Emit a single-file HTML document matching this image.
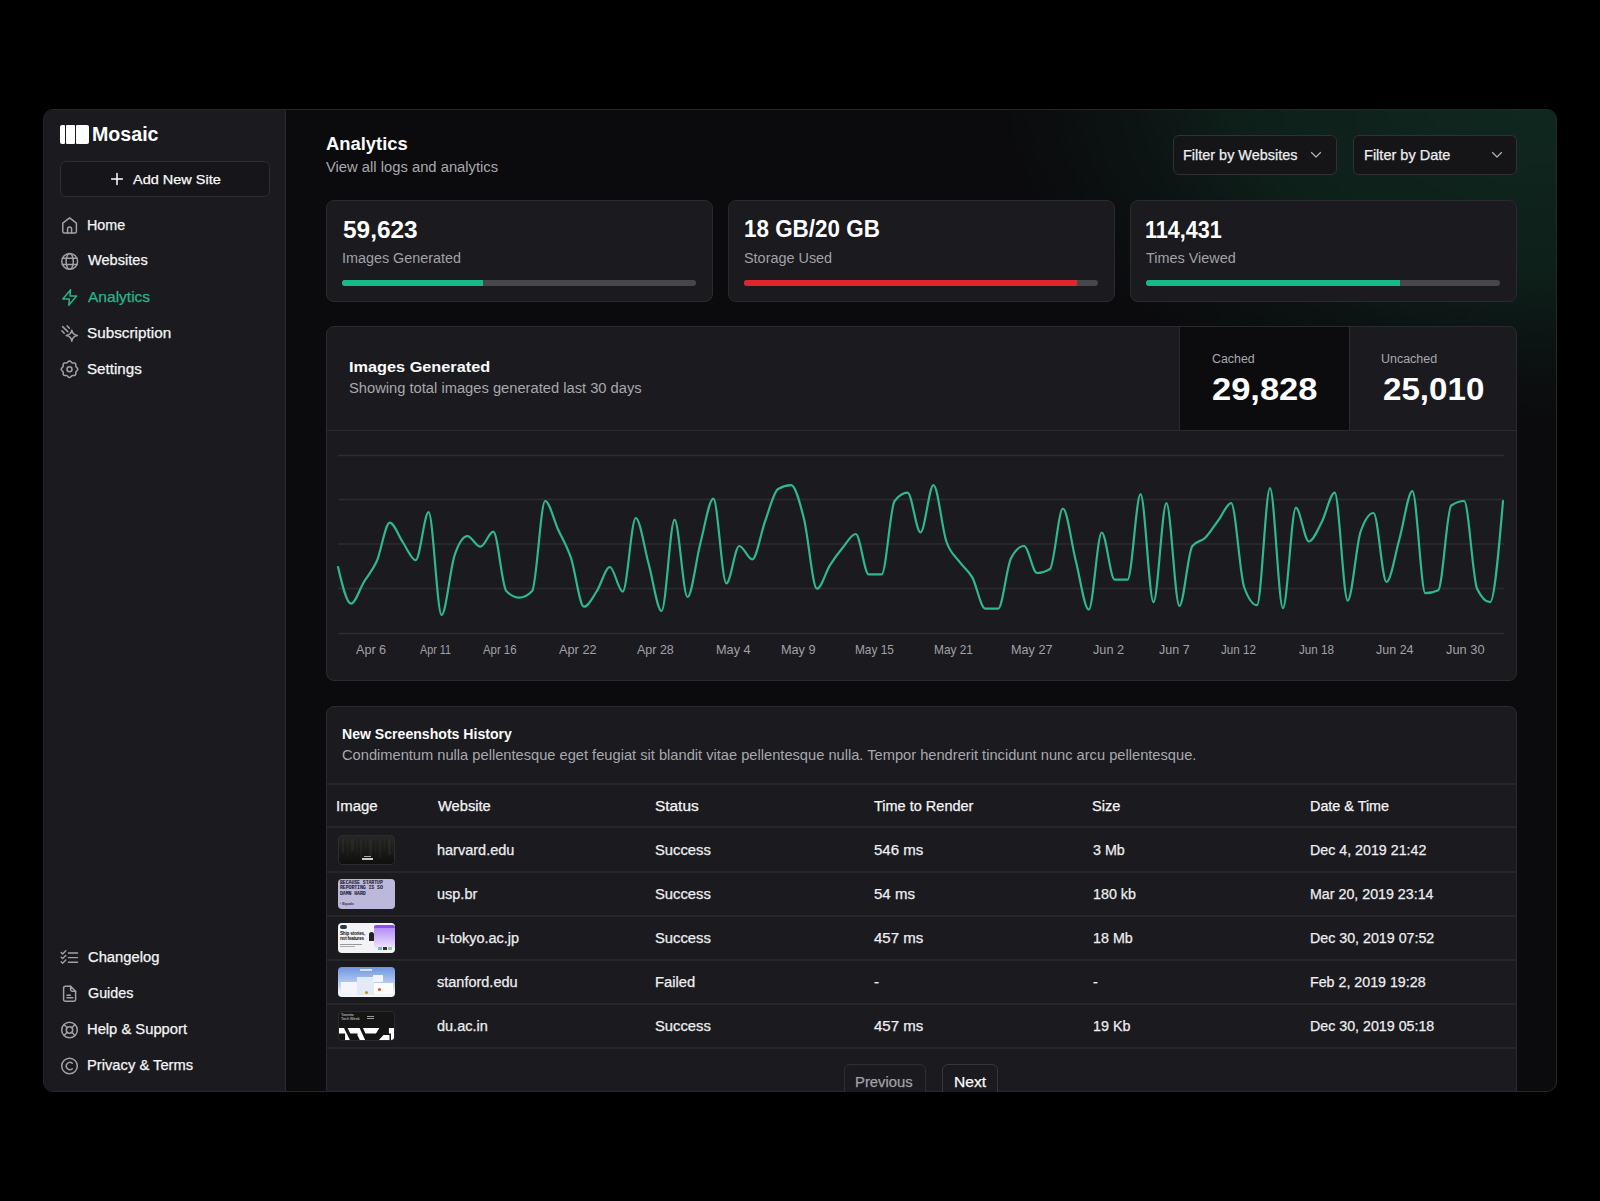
<!DOCTYPE html>
<html><head><meta charset="utf-8"><style>*{box-sizing:border-box;margin:0;padding:0}
html,body{width:1600px;height:1201px;background:#000;overflow:hidden;font-family:"Liberation Sans",sans-serif;color:#fff}
.a{position:absolute}
.t{position:absolute;white-space:nowrap;line-height:1;transform-origin:0 0}
#frame{position:absolute;left:43px;top:109px;width:1514px;height:983px;border:1px solid #27272c;border-radius:10px;overflow:hidden;background:#0b0b0e}
.ic{position:absolute;fill:none;stroke:#a1a1a6;stroke-width:1.5;stroke-linecap:round;stroke-linejoin:round;overflow:visible}
.card{position:absolute;background:#1a1a1f;border:1px solid #2a2a2f;border-radius:8px}
.bar{position:absolute;height:6px;border-radius:3px;background:#46464b;overflow:hidden}
.bar i{position:absolute;left:0;top:0;height:6px;display:block}
.hr{position:absolute;height:2px;background:#26262b}
.th0{position:absolute;width:57px;height:30px;border-radius:4px;overflow:hidden}

.m{-webkit-text-stroke:0.25px currentColor}
</style></head><body>
<div id="frame"><div class="a" style="left:0;top:0;width:1512px;height:981px;background:radial-gradient(ellipse 540px 330px at 1496px -20px,rgba(24,96,64,0.34) 0%,rgba(22,90,60,0.26) 55%,rgba(18,70,46,0.11) 80%,rgba(0,0,0,0) 100%)"></div><div class="a" style="left:0px;top:0px;width:242px;height:981px;background:#1a1a1f;border-right:1px solid #2a2a2f"></div><div class="a" style="left:15.5px;top:15px;width:5.5px;height:18.5px;background:#fff;border-radius:2px 1px 1px 2px"></div><div class="a" style="left:22.299999999999997px;top:15px;width:8.700000000000003px;height:18.5px;background:#fff;border-radius:1px"></div><div class="a" style="left:32px;top:15px;width:12.5px;height:18.5px;background:#fff;border-radius:1px 2px 2px 1px"></div><div class="a" style="left:15.5px;top:51px;width:210.0px;height:36px;border:1.5px solid #2e2e33;border-radius:6px;background:#16161a"></div><div class="card" style="left:282px;top:90px;width:387px;height:102px;"></div><div class="card" style="left:684px;top:90px;width:387px;height:102px;"></div><div class="card" style="left:1086px;top:90px;width:387px;height:102px;"></div><div class="card" style="left:282px;top:216px;width:1191px;height:355px;"></div><div class="a" style="left:1135px;top:217px;width:171px;height:104px;background:#0c0c0f;border-left:1px solid #2a2a2f;border-right:1px solid #2a2a2f"></div><div class="a" style="left:283px;top:320px;width:1189px;height:1px;background:#2a2a2f"></div><div class="card" style="left:282px;top:596px;width:1191px;height:414px;"></div><div class="a" style="left:1128.5px;top:24.5px;width:164.0px;height:40.0px;border:1px solid #303035;border-radius:6px;background:#151518"></div><div class="a" style="left:1308.5px;top:24.5px;width:164.0px;height:40.0px;border:1px solid #303035;border-radius:6px;background:#151518"></div></div><div class="bar" style="left:342px;top:280px;width:354px"><i style="width:141px;background:#17b986"></i></div><div class="bar" style="left:744px;top:280px;width:354px"><i style="width:333px;background:#e0262b"></i></div><div class="bar" style="left:1146px;top:280px;width:354px"><i style="width:254px;background:#17b986"></i></div><svg class="ic" style="left:1311.3px;top:151px;stroke:#b0b0b4;stroke-width:1.2" width="10" height="8" viewBox="0 0 10 8"><path d="M0.5 1.5l4.5 4.5 4.5-4.5"/></svg><svg class="ic" style="left:1491.8px;top:151px;stroke:#b0b0b4;stroke-width:1.2" width="10" height="8" viewBox="0 0 10 8"><path d="M0.5 1.5l4.5 4.5 4.5-4.5"/></svg><svg class="ic" style="left:111px;top:173px;stroke:#fff" width="12" height="12" viewBox="0 0 12 12"><path d="M6 0.6v10.8M0.6 6h10.8"/></svg><div class="hr" style="left:327px;top:783px;width:1189px"></div><div class="hr" style="left:327px;top:826px;width:1189px"></div><div class="hr" style="left:327px;top:871px;width:1189px"></div><div class="hr" style="left:327px;top:915px;width:1189px"></div><div class="hr" style="left:327px;top:959px;width:1189px"></div><div class="hr" style="left:327px;top:1003px;width:1189px"></div><div class="hr" style="left:327px;top:1047px;width:1189px"></div><div class="a" style="left:844px;top:1064px;width:82px;height:40px;border:1px solid #2e2e33;border-radius:6px;background:#1a1a1f"></div><div class="a" style="left:942px;top:1064px;width:56px;height:40px;border:1px solid #36363b;border-radius:6px;background:#1a1a1f"></div><div class="a" style="left:0;top:1092px;width:1600px;height:109px;background:#000"></div><svg class="ic" style="left:61px;top:216px;" width="18" height="19" viewBox="61 216 18 19"><path d="M62.8 223.2L69.6 217.8L76.4 223.2V231.4A1.6 1.6 0 0 1 74.8 233H64.4A1.6 1.6 0 0 1 62.8 231.4Z"/><path d="M67.6 233V229A2 2 0 0 1 71.6 229V233"/></svg><svg class="ic" style="left:60px;top:252px;" width="20" height="20" viewBox="60 252 20 20"><circle cx="69.7" cy="261.4" r="7.9"/><ellipse cx="69.7" cy="261.4" rx="3.6" ry="7.9"/><path d="M62.4 258.3H77M62.4 264.6H77"/></svg><svg class="ic" style="left:60px;top:288px;stroke:#27b487" width="20" height="20" viewBox="60 288 20 20"><path d="M70.6 289.8L62.8 299H69.4L68.8 305.2L76.6 296H70z"/></svg><svg class="ic" style="left:58px;top:322px;" width="24" height="24" viewBox="58 322 24 24"><path d="M71.8 330.2Q72.6 334.8 77.4 335.6Q72.6 336.4 71.8 341.2Q71 336.4 66.2 335.6Q71 334.8 71.8 330.2Z"/><path d="M62.6 326.6L67.8 331.6M67.2 325.9L69.4 328.2M61.9 330.7L64.2 333.2"/></svg><svg class="ic" style="left:58px;top:358px;" width="24" height="24" viewBox="58 358 24 24"><path d="M69.50 360.95L70.29 361.18L70.98 361.75L71.57 362.37L72.16 362.78L72.87 362.90L73.72 362.88L74.61 362.97L75.33 363.37L75.73 364.09L75.82 364.98L75.80 365.83L75.92 366.54L76.33 367.13L76.95 367.72L77.52 368.41L77.75 369.20L77.52 369.99L76.95 370.68L76.33 371.27L75.92 371.86L75.80 372.57L75.82 373.42L75.73 374.31L75.33 375.03L74.61 375.43L73.72 375.52L72.87 375.50L72.16 375.62L71.57 376.03L70.98 376.65L70.29 377.22L69.50 377.45L68.71 377.22L68.02 376.65L67.43 376.03L66.84 375.62L66.13 375.50L65.28 375.52L64.39 375.43L63.67 375.03L63.27 374.31L63.18 373.42L63.20 372.57L63.08 371.86L62.67 371.27L62.05 370.68L61.48 369.99L61.25 369.20L61.48 368.41L62.05 367.72L62.67 367.13L63.08 366.54L63.20 365.83L63.18 364.98L63.27 364.09L63.67 363.37L64.39 362.97L65.28 362.88L66.13 362.90L66.84 362.78L67.43 362.37L68.02 361.75L68.71 361.18L69.50 360.95Z"/><circle cx="69.5" cy="369.2" r="2.5"/></svg><svg class="ic" style="left:58px;top:948px;stroke-width:1.4" width="24" height="18" viewBox="58 948 24 18"><path d="M68.4 953H77.6M68.4 957.6H77.6M68.4 962.2H77.6"/><path d="M61.2 952.6L62.6 954L65.8 950.8M61.2 957.2L62.6 958.6L65.8 955.4M61.2 961.8L62.6 963.2L65.8 960"/></svg><svg class="ic" style="left:60px;top:983px;" width="20" height="20" viewBox="60 983 20 20"><path d="M70.6 986.2H65.4A1.8 1.8 0 0 0 63.6 988V999.4A1.8 1.8 0 0 0 65.4 1001.2H73.8A1.8 1.8 0 0 0 75.6 999.4V991.2"/><path d="M70.6 986.2V989.4A1.8 1.8 0 0 0 72.4 991.2H75.6Z"/><path d="M67 995.2H70.4M67 997.8H72.8"/></svg><svg class="ic" style="left:60px;top:1020px;" width="20" height="20" viewBox="60 1020 20 20"><circle cx="69.5" cy="1030" r="7.8"/><circle cx="69.5" cy="1030" r="3.2"/><path d="M64 1024.5L67.2 1027.7M71.8 1032.3L75 1035.5M75 1024.5L71.8 1027.7M67.2 1032.3L64 1035.5"/></svg><svg class="ic" style="left:60px;top:1056px;" width="20" height="20" viewBox="60 1056 20 20"><circle cx="69.5" cy="1066" r="7.8"/><path d="M72.3 1063.3A3.6 3.6 0 1 0 72.3 1068.7"/></svg><div class="th0" style="left:338px;top:834.5px;background:linear-gradient(#262624,#181817 60%,#0f0f0e);border:1px solid #2c2c2c"><div class="a" style="left:3px;top:3px;width:2px;height:14px;background:rgba(110,110,100,0.108)"></div><div class="a" style="left:8px;top:3px;width:1px;height:18px;background:rgba(110,110,100,0.09)"></div><div class="a" style="left:12px;top:3px;width:3px;height:12px;background:rgba(110,110,100,0.12)"></div><div class="a" style="left:17px;top:3px;width:1px;height:16px;background:rgba(110,110,100,0.072)"></div><div class="a" style="left:21px;top:3px;width:2px;height:20px;background:rgba(110,110,100,0.096)"></div><div class="a" style="left:26px;top:3px;width:1px;height:13px;background:rgba(110,110,100,0.084)"></div><div class="a" style="left:30px;top:3px;width:3px;height:17px;background:rgba(110,110,100,0.12)"></div><div class="a" style="left:36px;top:3px;width:1px;height:15px;background:rgba(110,110,100,0.072)"></div><div class="a" style="left:40px;top:3px;width:2px;height:19px;background:rgba(110,110,100,0.096)"></div><div class="a" style="left:45px;top:3px;width:1px;height:12px;background:rgba(110,110,100,0.084)"></div><div class="a" style="left:49px;top:3px;width:3px;height:16px;background:rgba(110,110,100,0.12)"></div><div class="a" style="left:53px;top:3px;width:1px;height:14px;background:rgba(110,110,100,0.072)"></div><div class="a" style="left:25px;top:20.5px;width:7px;height:1.2px;background:#aaa"></div><div class="a" style="left:23px;top:22.5px;width:11px;height:1.6px;background:#ccc"></div></div><div class="th0" style="left:338px;top:879px;background:#bcb8dc"><div class="a" style="left:2px;top:2px;font:bold 5px/5.3px 'Liberation Mono',monospace;color:#1d1b2e;letter-spacing:-.15px">BECAUSE STARTUP<br>REPORTING IS SO<br>DAMN HARD</div><div class="a" style="left:2px;top:23px;font:bold 3.6px/4px 'Liberation Sans';color:#333">‹ Equals</div></div><div class="th0" style="left:338px;top:923px;background:#f3f2f5"><div class="a" style="left:2px;top:2px;width:7px;height:4px;background:#2b3a4a;border-radius:2px"></div><div class="a" style="left:2px;top:9px;font:bold 4.6px/4.6px 'Liberation Sans';color:#111;letter-spacing:-.2px">Ship stories,<br>not features</div><div class="a" style="left:2px;top:21px;width:22px;height:1px;background:#999"></div><div class="a" style="left:2px;top:23px;width:15px;height:1px;background:#aaa"></div><div class="a" style="left:36px;top:2px;width:21px;height:4px;background:#8d4ef0;border-radius:2px 2px 0 0"></div><div class="a" style="left:36px;top:5px;width:21px;height:20px;background:linear-gradient(#b58cf5,#efe6fd)"></div><div class="a" style="left:31px;top:9px;width:5px;height:9px;background:#222;border-radius:3px 3px 1px 1px"></div><div class="a" style="left:40px;top:24px;width:4px;height:3px;background:#5bc0de"></div><div class="a" style="left:45px;top:24px;width:4px;height:3px;background:#333"></div><div class="a" style="left:50px;top:24px;width:4px;height:3px;background:#7ed67e"></div></div><div class="th0" style="left:338px;top:967px;background:linear-gradient(#6d95e0,#a9c2ee 45%,#e8eef9 80%,#f6f8fc)"><div class="a" style="left:22px;top:2px;width:12px;height:2px;background:rgba(255,255,255,.7)"></div><div class="a" style="left:3px;top:15px;width:19px;height:11px;background:#f4f6fb"></div><div class="a" style="left:19px;top:10px;width:17px;height:18px;background:#e3e9f5"></div><div class="a" style="left:35px;top:8px;width:10px;height:7px;background:#f0f4fb"></div><div class="a" style="left:36px;top:16px;width:19px;height:11px;background:#fbfcfe"></div><div class="a" style="left:40px;top:21px;width:3px;height:3px;border-radius:50%;background:#d9552a"></div><div class="a" style="left:27px;top:24px;width:3px;height:3px;border-radius:50%;background:#c90"></div></div><div class="th0" style="left:338px;top:1011px;background:#151515;border:1px solid #2a2a2a"><div class="a" style="left:2px;top:2px;font:3.8px/3.8px 'Liberation Sans';color:#ddd">Toronto<br>Tech Week</div><div class="a" style="left:28px;top:4px;width:7px;height:1px;background:#999"></div><div class="a" style="left:28px;top:6px;width:7px;height:1px;background:#999"></div><svg class="a" style="left:-1px;top:-1px" width="57" height="30" viewBox="0 0 57 30"><path d="M0 17H6L12.4 30H7.1V22.4H0Z M9.6 17H21.6L27.6 30H22.3L19.5 24.5V22.4H12.3Z M24.9 17H41.4L38 22.4H27.5Z M40 30L45.5 24H51.5V30Z M50.9 17H57V30H53V22.4H50.9Z" fill="#fff"/></svg></div>
<svg class="a" style="left:0;top:0" width="1600" height="1201" viewBox="0 0 1600 1201"><line x1="338" x2="1504" y1="455.5" y2="455.5" stroke="#2c2c31" stroke-width="1.3"/><line x1="338" x2="1504" y1="499.5" y2="499.5" stroke="#2c2c31" stroke-width="1.3"/><line x1="338" x2="1504" y1="544" y2="544" stroke="#2c2c31" stroke-width="1.3"/><line x1="338" x2="1504" y1="588.5" y2="588.5" stroke="#2c2c31" stroke-width="1.3"/><line x1="338" x2="1504" y1="633.5" y2="633.5" stroke="#2c2c31" stroke-width="1.3"/><path d="M338.00,567.00C342.31,585.35 346.63,603.70 350.94,603.70C355.26,603.70 359.57,589.12 363.89,582.00C368.20,574.88 372.52,570.88 376.83,561.00C381.15,551.12 385.46,522.70 389.78,522.70C394.09,522.70 398.41,535.75 402.72,542.00C407.04,548.25 411.35,560.20 415.67,560.20C419.98,560.20 424.30,512.20 428.61,512.20C432.93,512.20 437.24,615.00 441.56,615.00C445.87,615.00 450.19,568.70 454.50,555.70C458.81,542.70 463.13,536.20 467.44,536.20C471.76,536.20 476.07,546.70 480.39,546.70C484.70,546.70 489.02,531.70 493.33,531.70C497.65,531.70 501.96,586.53 506.28,591.00C510.59,595.47 514.91,597.70 519.22,597.70C523.54,597.70 527.85,595.47 532.17,591.00C536.48,586.53 540.80,501.00 545.11,501.00C549.43,501.00 553.74,520.00 558.06,529.50C562.37,539.00 566.69,545.13 571.00,558.00C575.31,570.87 579.63,606.70 583.94,606.70C588.26,606.70 592.57,597.62 596.89,591.00C601.20,584.38 605.52,567.00 609.83,567.00C614.15,567.00 618.46,591.70 622.78,591.70C627.09,591.70 631.41,518.00 635.72,518.00C640.04,518.00 644.35,548.50 648.67,564.00C652.98,579.50 657.30,611.00 661.61,611.00C665.93,611.00 670.24,519.70 674.56,519.70C678.87,519.70 683.19,597.00 687.50,597.00C691.81,597.00 696.13,559.38 700.44,543.00C704.76,526.62 709.07,498.70 713.39,498.70C717.70,498.70 722.02,583.40 726.33,583.40C730.65,583.40 734.96,546.00 739.28,546.00C743.59,546.00 747.91,559.40 752.22,559.40C756.54,559.40 760.85,532.73 765.17,521.00C769.48,509.27 773.80,491.53 778.11,489.00C782.43,486.47 786.74,485.20 791.06,485.20C795.37,485.20 799.69,501.75 804.00,519.00C808.31,536.25 812.63,588.70 816.94,588.70C821.26,588.70 825.57,572.27 829.89,565.40C834.20,558.53 838.52,552.73 842.83,547.50C847.15,542.27 851.46,534.00 855.78,534.00C860.09,534.00 864.41,574.40 868.72,574.40C873.04,574.40 877.35,574.40 881.67,574.40C885.98,574.40 890.30,506.53 894.61,501.00C898.93,495.47 903.24,492.70 907.56,492.70C911.87,492.70 916.19,532.50 920.50,532.50C924.81,532.50 929.13,485.20 933.44,485.20C937.76,485.20 942.07,528.75 946.39,541.50C950.70,554.25 955.02,555.72 959.33,561.70C963.65,567.68 967.96,569.58 972.28,577.40C976.59,585.22 980.91,608.60 985.22,608.60C989.54,608.60 993.85,608.60 998.17,608.60C1002.48,608.60 1006.80,566.00 1011.11,558.00C1015.43,550.00 1019.74,546.00 1024.06,546.00C1028.37,546.00 1032.69,573.00 1037.00,573.00C1041.31,573.00 1045.63,571.67 1049.94,569.00C1054.26,566.33 1058.57,508.50 1062.89,508.50C1067.20,508.50 1071.52,544.13 1075.83,561.00C1080.15,577.87 1084.46,609.70 1088.78,609.70C1093.09,609.70 1097.41,532.50 1101.72,532.50C1106.04,532.50 1110.35,579.70 1114.67,579.70C1118.98,579.70 1123.30,579.70 1127.61,579.70C1131.93,579.70 1136.24,494.20 1140.56,494.20C1144.87,494.20 1149.19,602.20 1153.50,602.20C1157.81,602.20 1162.13,503.20 1166.44,503.20C1170.76,503.20 1175.07,606.00 1179.39,606.00C1183.70,606.00 1188.02,551.53 1192.33,546.00C1196.65,540.47 1200.96,541.95 1205.28,537.70C1209.59,533.45 1213.91,526.25 1218.22,520.50C1222.54,514.75 1226.85,503.20 1231.17,503.20C1235.48,503.20 1239.80,574.87 1244.11,587.00C1248.43,599.13 1252.74,605.20 1257.06,605.20C1261.37,605.20 1265.69,488.20 1270.00,488.20C1274.31,488.20 1278.63,608.20 1282.94,608.20C1287.26,608.20 1291.57,507.70 1295.89,507.70C1300.20,507.70 1304.52,541.50 1308.83,541.50C1313.15,541.50 1317.46,530.13 1321.78,522.00C1326.09,513.87 1330.41,492.70 1334.72,492.70C1339.04,492.70 1343.35,600.70 1347.67,600.70C1351.98,600.70 1356.30,544.17 1360.61,531.70C1364.93,519.23 1369.24,513.00 1373.56,513.00C1377.87,513.00 1382.19,582.00 1386.50,582.00C1390.81,582.00 1395.13,554.13 1399.44,539.00C1403.76,523.87 1408.07,491.20 1412.39,491.20C1416.70,491.20 1421.02,593.20 1425.33,593.20C1429.65,593.20 1433.96,592.20 1438.28,590.20C1442.59,588.20 1446.91,508.50 1451.22,505.50C1455.54,502.50 1459.85,501.00 1464.17,501.00C1468.48,501.00 1472.80,579.70 1477.11,588.70C1481.43,597.70 1485.74,602.20 1490.06,602.20C1494.37,602.20 1498.69,551.60 1503.00,501.00" fill="none" stroke="#2eb98a" stroke-width="2.2" stroke-linejoin="round" stroke-linecap="round"/></svg>
<div class="t" id="mosaic" style="left:92.43px;top:125.26px;font-size:19.50px;font-weight:bold;color:#ffffff;transform:scaleX(1.0062)">Mosaic</div>
<div class="t m" id="addnew" style="left:133.42px;top:173.01px;font-size:13.50px;font-weight:normal;color:#fafafa;transform:scaleX(1.0732)">Add New Site</div>
<div class="t m" id="n_home" style="left:87.40px;top:218.01px;font-size:14.00px;font-weight:normal;color:#f4f4f5;transform:scaleX(1.0198)">Home</div>
<div class="t m" id="n_web" style="left:88.41px;top:253.40px;font-size:14.00px;font-weight:normal;color:#f4f4f5;transform:scaleX(1.0422)">Websites</div>
<div class="t m" id="n_ana" style="left:88.44px;top:289.71px;font-size:14.00px;font-weight:normal;color:#27b487;transform:scaleX(1.1091)">Analytics</div>
<div class="t m" id="n_sub" style="left:86.91px;top:325.81px;font-size:14.00px;font-weight:normal;color:#f4f4f5;transform:scaleX(1.0921)">Subscription</div>
<div class="t m" id="n_set" style="left:86.92px;top:361.81px;font-size:14.00px;font-weight:normal;color:#f4f4f5;transform:scaleX(1.0820)">Settings</div>
<div class="t m" id="n_chg" style="left:88.20px;top:950.40px;font-size:14.00px;font-weight:normal;color:#f4f4f5;transform:scaleX(1.0537)">Changelog</div>
<div class="t m" id="n_gui" style="left:88.20px;top:986.40px;font-size:14.00px;font-weight:normal;color:#f4f4f5;transform:scaleX(1.0227)">Guides</div>
<div class="t m" id="n_hlp" style="left:87.14px;top:1022.40px;font-size:14.00px;font-weight:normal;color:#f4f4f5;transform:scaleX(1.0532)">Help &amp; Support</div>
<div class="t m" id="n_prv" style="left:87.16px;top:1058.11px;font-size:14.00px;font-weight:normal;color:#f4f4f5;transform:scaleX(1.0520)">Privacy &amp; Terms</div>
<div class="t" id="title" style="left:326.00px;top:136.01px;font-size:17.50px;font-weight:bold;color:#fafafa;transform:scaleX(1.0509)">Analytics</div>
<div class="t" id="sub" style="left:326.01px;top:159.90px;font-size:14.00px;font-weight:normal;color:#a8a8ad;transform:scaleX(1.0550)">View all logs and analytics</div>
<div class="t m" id="f_web" style="left:1183.38px;top:148.21px;font-size:14.50px;font-weight:normal;color:#ededf0;transform:scaleX(0.9958)">Filter by Websites</div>
<div class="t m" id="f_dat" style="left:1364.19px;top:148.21px;font-size:14.50px;font-weight:normal;color:#ededf0;transform:scaleX(1.0025)">Filter by Date</div>
<div class="t" id="c1n" style="left:342.97px;top:218.51px;font-size:23.00px;font-weight:bold;color:#ffffff;transform:scaleX(1.0618)">59,623</div>
<div class="t" id="c1l" style="left:341.97px;top:250.51px;font-size:14.00px;font-weight:normal;color:#a1a1a6;transform:scaleX(1.0263)">Images Generated</div>
<div class="t" id="c2n" style="left:744.01px;top:218.26px;font-size:23.00px;font-weight:bold;color:#ffffff;transform:scaleX(0.9750)">18 GB/20 GB</div>
<div class="t" id="c2l" style="left:743.99px;top:250.51px;font-size:14.00px;font-weight:normal;color:#a1a1a6;transform:scaleX(1.0295)">Storage Used</div>
<div class="t" id="c3n" style="left:1145.06px;top:219.01px;font-size:23.00px;font-weight:bold;color:#ffffff;transform:scaleX(0.9383)">114,431</div>
<div class="t" id="c3l" style="left:1146.00px;top:250.51px;font-size:14.00px;font-weight:normal;color:#a1a1a6;transform:scaleX(1.0289)">Times Viewed</div>
<div class="t" id="ch_t" style="left:348.91px;top:359.00px;font-size:15.00px;font-weight:bold;color:#fafafa;transform:scaleX(1.0853)">Images Generated</div>
<div class="t" id="ch_s" style="left:348.95px;top:381.01px;font-size:14.00px;font-weight:normal;color:#a8a8ad;transform:scaleX(1.0505)">Showing total images generated last 30 days</div>
<div class="t" id="cached" style="left:1211.80px;top:352.81px;font-size:12.50px;font-weight:normal;color:#a8a8ad;transform:scaleX(0.9908)">Cached</div>
<div class="t" id="cachedn" style="left:1211.96px;top:373.76px;font-size:31.00px;font-weight:bold;color:#ffffff;transform:scaleX(1.1120)">29,828</div>
<div class="t" id="uncached" style="left:1381.36px;top:352.81px;font-size:12.50px;font-weight:normal;color:#a8a8ad;transform:scaleX(0.9973)">Uncached</div>
<div class="t" id="uncachedn" style="left:1382.99px;top:373.76px;font-size:31.00px;font-weight:bold;color:#ffffff;transform:scaleX(1.0689)">25,010</div>
<div class="t" id="tb_t" style="left:342.02px;top:727.26px;font-size:14.50px;font-weight:bold;color:#fafafa;transform:scaleX(0.9713)">New Screenshots History</div>
<div class="t" id="tb_s" style="left:342.00px;top:748.01px;font-size:14.50px;font-weight:normal;color:#a8a8ad;transform:scaleX(1.0107)">Condimentum nulla pellentesque eget feugiat sit blandit vitae pellentesque nulla. Tempor hendrerit tincidunt nunc arcu pellentesque.</div>
<div class="t" id="xl0" style="left:355.98px;top:643.26px;font-size:13.00px;font-weight:normal;color:#a1a1a6;transform:scaleX(0.9677)">Apr 6</div>
<div class="t" id="xl1" style="left:419.90px;top:643.26px;font-size:13.00px;font-weight:normal;color:#a1a1a6;transform:scaleX(0.8317)">Apr 11</div>
<div class="t" id="xl2" style="left:482.94px;top:643.26px;font-size:13.00px;font-weight:normal;color:#a1a1a6;transform:scaleX(0.8755)">Apr 16</div>
<div class="t" id="xl3" style="left:559.03px;top:643.26px;font-size:13.00px;font-weight:normal;color:#a1a1a6;transform:scaleX(0.9809)">Apr 22</div>
<div class="t" id="xl4" style="left:637.03px;top:643.26px;font-size:13.00px;font-weight:normal;color:#a1a1a6;transform:scaleX(0.9611)">Apr 28</div>
<div class="t" id="xl5" style="left:716.00px;top:643.26px;font-size:13.00px;font-weight:normal;color:#a1a1a6;transform:scaleX(0.9797)">May 4</div>
<div class="t" id="xl6" style="left:780.60px;top:643.26px;font-size:13.00px;font-weight:normal;color:#a1a1a6;transform:scaleX(0.9759)">May 9</div>
<div class="t" id="xl7" style="left:855.40px;top:643.26px;font-size:13.00px;font-weight:normal;color:#a1a1a6;transform:scaleX(0.9101)">May 15</div>
<div class="t" id="xl8" style="left:933.85px;top:643.26px;font-size:13.00px;font-weight:normal;color:#a1a1a6;transform:scaleX(0.9145)">May 21</div>
<div class="t" id="xl9" style="left:1010.80px;top:643.26px;font-size:13.00px;font-weight:normal;color:#a1a1a6;transform:scaleX(0.9719)">May 27</div>
<div class="t" id="xl10" style="left:1093.39px;top:643.26px;font-size:13.00px;font-weight:normal;color:#a1a1a6;transform:scaleX(0.9749)">Jun 2</div>
<div class="t" id="xl11" style="left:1158.98px;top:643.26px;font-size:13.00px;font-weight:normal;color:#a1a1a6;transform:scaleX(0.9615)">Jun 7</div>
<div class="t" id="xl12" style="left:1220.97px;top:643.26px;font-size:13.00px;font-weight:normal;color:#a1a1a6;transform:scaleX(0.8974)">Jun 12</div>
<div class="t" id="xl13" style="left:1299.03px;top:643.26px;font-size:13.00px;font-weight:normal;color:#a1a1a6;transform:scaleX(0.8974)">Jun 18</div>
<div class="t" id="xl14" style="left:1376.01px;top:643.26px;font-size:13.00px;font-weight:normal;color:#a1a1a6;transform:scaleX(0.9620)">Jun 24</div>
<div class="t" id="xl15" style="left:1445.98px;top:643.26px;font-size:13.00px;font-weight:normal;color:#a1a1a6;transform:scaleX(0.9877)">Jun 30</div>
<div class="t m" id="th_img" style="left:336.30px;top:798.90px;font-size:14.00px;font-weight:normal;color:#f4f4f5;transform:scaleX(1.0709)">Image</div>
<div class="t m" id="th_web" style="left:437.79px;top:798.90px;font-size:14.00px;font-weight:normal;color:#f4f4f5;transform:scaleX(1.0481)">Website</div>
<div class="t m" id="th_sta" style="left:654.70px;top:798.90px;font-size:14.00px;font-weight:normal;color:#f4f4f5;transform:scaleX(1.1004)">Status</div>
<div class="t m" id="th_tim" style="left:874.01px;top:798.90px;font-size:14.00px;font-weight:normal;color:#f4f4f5;transform:scaleX(1.0359)">Time to Render</div>
<div class="t m" id="th_siz" style="left:1091.95px;top:798.90px;font-size:14.00px;font-weight:normal;color:#f4f4f5;transform:scaleX(1.0433)">Size</div>
<div class="t m" id="th_dat" style="left:1309.59px;top:798.90px;font-size:14.00px;font-weight:normal;color:#f4f4f5;transform:scaleX(1.0262)">Date &amp; Time</div>
<div class="t m" id="r0c0" style="left:436.76px;top:842.61px;font-size:14.00px;font-weight:normal;color:#ededf0;transform:scaleX(1.0350)">harvard.edu</div>
<div class="t m" id="r0c1" style="left:654.77px;top:842.61px;font-size:14.00px;font-weight:normal;color:#ededf0;transform:scaleX(1.0542)">Success</div>
<div class="t m" id="r0c2" style="left:873.91px;top:842.61px;font-size:14.00px;font-weight:normal;color:#ededf0;transform:scaleX(1.0729)">546 ms</div>
<div class="t m" id="r0c3" style="left:1092.98px;top:842.61px;font-size:14.00px;font-weight:normal;color:#ededf0;transform:scaleX(1.0220)">3 Mb</div>
<div class="t m" id="r0c4" style="left:1309.58px;top:842.61px;font-size:14.00px;font-weight:normal;color:#ededf0;transform:scaleX(1.0168)">Dec 4, 2019 21:42</div>
<div class="t m" id="prev" style="left:855.37px;top:1074.90px;font-size:14.00px;font-weight:normal;color:#a1a1a6;transform:scaleX(1.0576)">Previous</div>
<div class="t m" id="next" style="left:953.53px;top:1074.90px;font-size:14.00px;font-weight:normal;color:#fafafa;transform:scaleX(1.1160)">Next</div>
<div class="t m" style="left:436.76px;top:886.61px;font-size:14.00px;color:#ededf0;transform:scaleX(1.0350)">usp.br</div>
<div class="t m" style="left:654.77px;top:886.61px;font-size:14.00px;color:#ededf0;transform:scaleX(1.0542)">Success</div>
<div class="t m" style="left:873.91px;top:886.61px;font-size:14.00px;color:#ededf0;transform:scaleX(1.0729)">54 ms</div>
<div class="t m" style="left:1092.98px;top:886.61px;font-size:14.00px;color:#ededf0;transform:scaleX(1.0220)">180 kb</div>
<div class="t m" style="left:1309.58px;top:886.61px;font-size:14.00px;color:#ededf0;transform:scaleX(1.0168)">Mar 20, 2019 23:14</div>
<div class="t m" style="left:436.76px;top:930.61px;font-size:14.00px;color:#ededf0;transform:scaleX(1.0350)">u-tokyo.ac.jp</div>
<div class="t m" style="left:654.77px;top:930.61px;font-size:14.00px;color:#ededf0;transform:scaleX(1.0542)">Success</div>
<div class="t m" style="left:873.91px;top:930.61px;font-size:14.00px;color:#ededf0;transform:scaleX(1.0729)">457 ms</div>
<div class="t m" style="left:1092.98px;top:930.61px;font-size:14.00px;color:#ededf0;transform:scaleX(1.0220)">18 Mb</div>
<div class="t m" style="left:1309.58px;top:930.61px;font-size:14.00px;color:#ededf0;transform:scaleX(1.0168)">Dec 30, 2019 07:52</div>
<div class="t m" style="left:436.76px;top:974.61px;font-size:14.00px;color:#ededf0;transform:scaleX(1.0350)">stanford.edu</div>
<div class="t m" style="left:654.77px;top:974.61px;font-size:14.00px;color:#ededf0;transform:scaleX(1.0542)">Failed</div>
<div class="t m" style="left:873.91px;top:974.61px;font-size:14.00px;color:#ededf0;transform:scaleX(1.0729)">-</div>
<div class="t m" style="left:1092.98px;top:974.61px;font-size:14.00px;color:#ededf0;transform:scaleX(1.0220)">-</div>
<div class="t m" style="left:1309.58px;top:974.61px;font-size:14.00px;color:#ededf0;transform:scaleX(1.0168)">Feb 2, 2019 19:28</div>
<div class="t m" style="left:436.76px;top:1018.61px;font-size:14.00px;color:#ededf0;transform:scaleX(1.0350)">du.ac.in</div>
<div class="t m" style="left:654.77px;top:1018.61px;font-size:14.00px;color:#ededf0;transform:scaleX(1.0542)">Success</div>
<div class="t m" style="left:873.91px;top:1018.61px;font-size:14.00px;color:#ededf0;transform:scaleX(1.0729)">457 ms</div>
<div class="t m" style="left:1092.98px;top:1018.61px;font-size:14.00px;color:#ededf0;transform:scaleX(1.0220)">19 Kb</div>
<div class="t m" style="left:1309.58px;top:1018.61px;font-size:14.00px;color:#ededf0;transform:scaleX(1.0168)">Dec 30, 2019 05:18</div>

</body></html>
